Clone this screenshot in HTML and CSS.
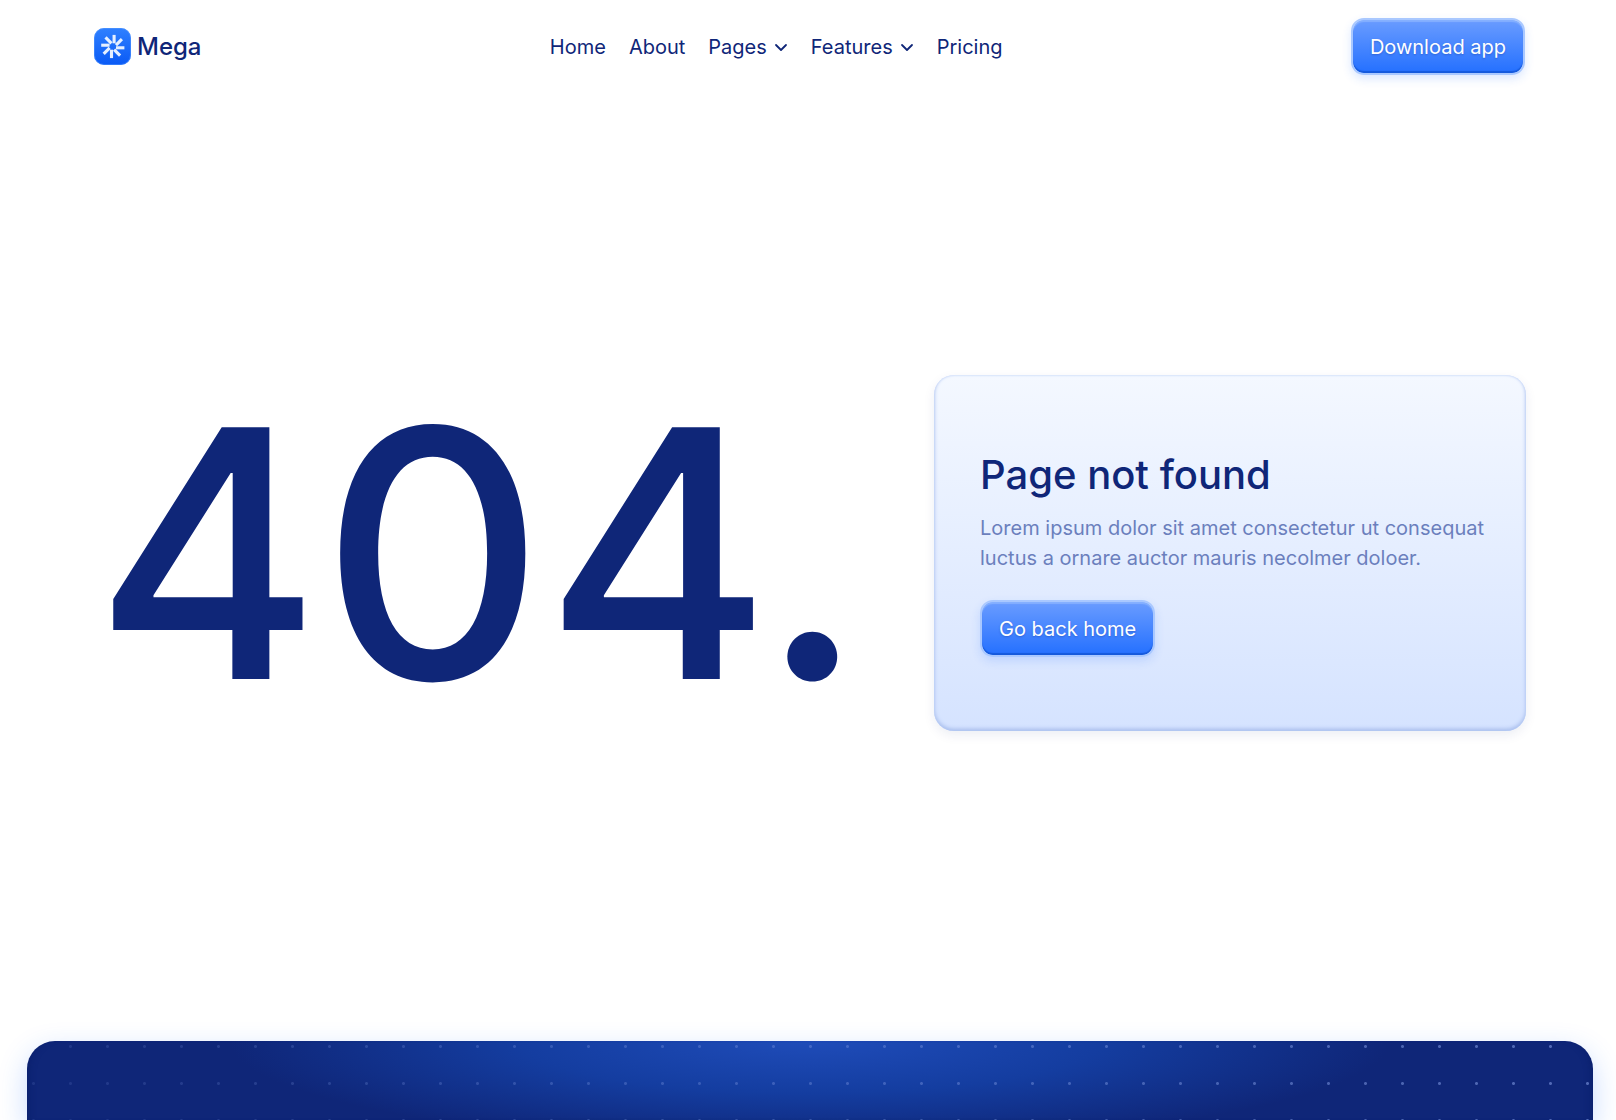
FILE: index.html
```html
<!DOCTYPE html>
<html lang="en">
<head>
    <meta charset="UTF-8">
    <meta name="viewport" content="width=device-width, initial-scale=1.0">
    <title>Mega - Page not found</title>
    <link rel="stylesheet" href="styles.css">
</head>
<body>
    <header class="header">
        <a href="#" class="logo">
            <svg width="37" height="37" viewBox="0 0 37 37" aria-hidden="true">
                <defs>
                    <linearGradient id="logoFill" x1="0" y1="0" x2="0" y2="1">
                        <stop offset="0" stop-color="#2f80ff"/>
                        <stop offset="1" stop-color="#0a5af5"/>
                    </linearGradient>
                    <path id="ray" d="M1.3 -11.6V-3.2"/>
                </defs>
                <rect width="37" height="37" rx="10" fill="url(#logoFill)"/>
                <rect x="0.5" y="0.5" width="36" height="36" rx="9.5" fill="none" stroke="#5a9bff" stroke-opacity="0.5"/>
                <g transform="translate(18.8 18.5)" stroke="#e6f0ff" stroke-width="3.1">
                    <use href="#ray"/>
                    <use href="#ray" transform="rotate(45)"/>
                    <use href="#ray" transform="rotate(90)"/>
                    <use href="#ray" transform="rotate(135)"/>
                    <use href="#ray" transform="rotate(180)"/>
                    <use href="#ray" transform="rotate(225)"/>
                    <use href="#ray" transform="rotate(270)"/>
                    <use href="#ray" transform="rotate(315)"/>
                </g>
            </svg>
            <span>Mega</span>
        </a>
        <nav class="nav">
            <a href="#">Home</a>
            <a href="#">About</a>
            <a href="#">Pages
                <svg class="chevron" width="14" height="14" viewBox="0 0 14 14" aria-hidden="true"><path d="M2 5l5 5 5-5"/></svg>
            </a>
            <a href="#">Features
                <svg class="chevron" width="14" height="14" viewBox="0 0 14 14" aria-hidden="true"><path d="M2 5l5 5 5-5"/></svg>
            </a>
            <a href="#">Pricing</a>
        </nav>
        <button type="button" class="btn">Download app</button>
    </header>

    <main class="main">
        <div class="code">404.</div>
        <section class="card">
            <h1>Page not found</h1>
            <p>Lorem ipsum dolor sit amet consectetur ut consequat luctus a ornare auctor mauris necolmer doloer.</p>
            <button type="button" class="btn">Go back home</button>
        </section>
    </main>

    <footer class="footer"></footer>
</body>
</html>
```

FILE: styles.css
```css
* {
    box-sizing: border-box;
}

body {
    display: flex;
    flex-direction: column;
    min-height: 100vh;
    margin: 0;
    background-color: #fff;
    color: #0f2678;
    font-family: Inter, "Liberation Sans", sans-serif;
    font-size: 20px;
    overflow-x: hidden;
}

a {
    color: inherit;
    text-decoration: none;
}

.header {
    display: flex;
    justify-content: space-between;
    align-items: center;
    padding: 18px 91px 0 94px;
}

.logo {
    display: flex;
    align-items: center;
    gap: 6px;
    font-size: 24px;
    font-weight: 500;
}

.nav {
    display: flex;
    gap: 23px;
}

.nav a {
    display: flex;
    align-items: center;
    gap: 7px;
}

.chevron {
    fill: none;
    stroke: currentColor;
    stroke-width: 1.8;
    stroke-linecap: round;
    stroke-linejoin: round;
}

.btn {
    height: 57px;
    padding: 0 17px;
    border: 2px solid #a9c8ff;
    border-radius: 13px;
    background: linear-gradient(#6a9cff, #2470ff) padding-box;
    box-shadow: inset 0 2px 1px #85b0ff, inset 0 -2px 1px #1559dc, 0 4px 10px rgba(36, 112, 255, 0.16);
    color: #fff;
    font-family: inherit;
    font-size: 20px;
    text-shadow: 0 1px 2px rgba(15, 38, 120, 0.3);
    cursor: pointer;
}

.main {
    display: flex;
    justify-content: space-between;
    align-items: center;
    padding: 300px 90px 310px 94px;
}

.code {
    font-size: 346px;
    font-weight: 500;
    line-height: 356px;
}

.card {
    width: 592px;
    padding: 76px 36px 74px 46px;
    border-radius: 20px;
    background: linear-gradient(#f4f8ff, #d5e3ff);
    box-shadow: inset 0 0 2px #bcd0f8, inset 0 -2px 4px #a3b9ea, 0 4px 12px rgba(15, 38, 120, 0.08);
}

.card h1 {
    margin: 0 0 14px;
    font-size: 40px;
    font-weight: 500;
    line-height: 48px;
}

.card p {
    margin: 0 0 27px;
    color: #6b7fbd;
    line-height: 30px;
}

.footer {
    position: relative;
    flex: 1;
    min-height: 78px;
    margin: 0 23px 0 27px;
    border-radius: 28px 28px 0 0;
    background: radial-gradient(580px 104px at 50% 0, #1f4cb9, #143da0 50%, rgba(15, 38, 120, 0)), #0f2678;
    box-shadow: inset 8px 0 8px -8px #081c66, inset -8px 0 8px -8px #081c66, 0 10px 28px rgba(36, 112, 255, 0.25);
}

/* dotted pattern, fades out to the left */
.footer::before {
    content: "";
    position: absolute;
    inset: 0;
    border-radius: inherit;
    background: radial-gradient(circle, #7f98e0 1px, transparent 2px) -12px -13px / 37px 37px;
    -webkit-mask-image: linear-gradient(to right, rgba(0, 0, 0, 0.15), rgba(0, 0, 0, 0.6));
    mask-image: linear-gradient(to right, rgba(0, 0, 0, 0.15), rgba(0, 0, 0, 0.6));
}
```
